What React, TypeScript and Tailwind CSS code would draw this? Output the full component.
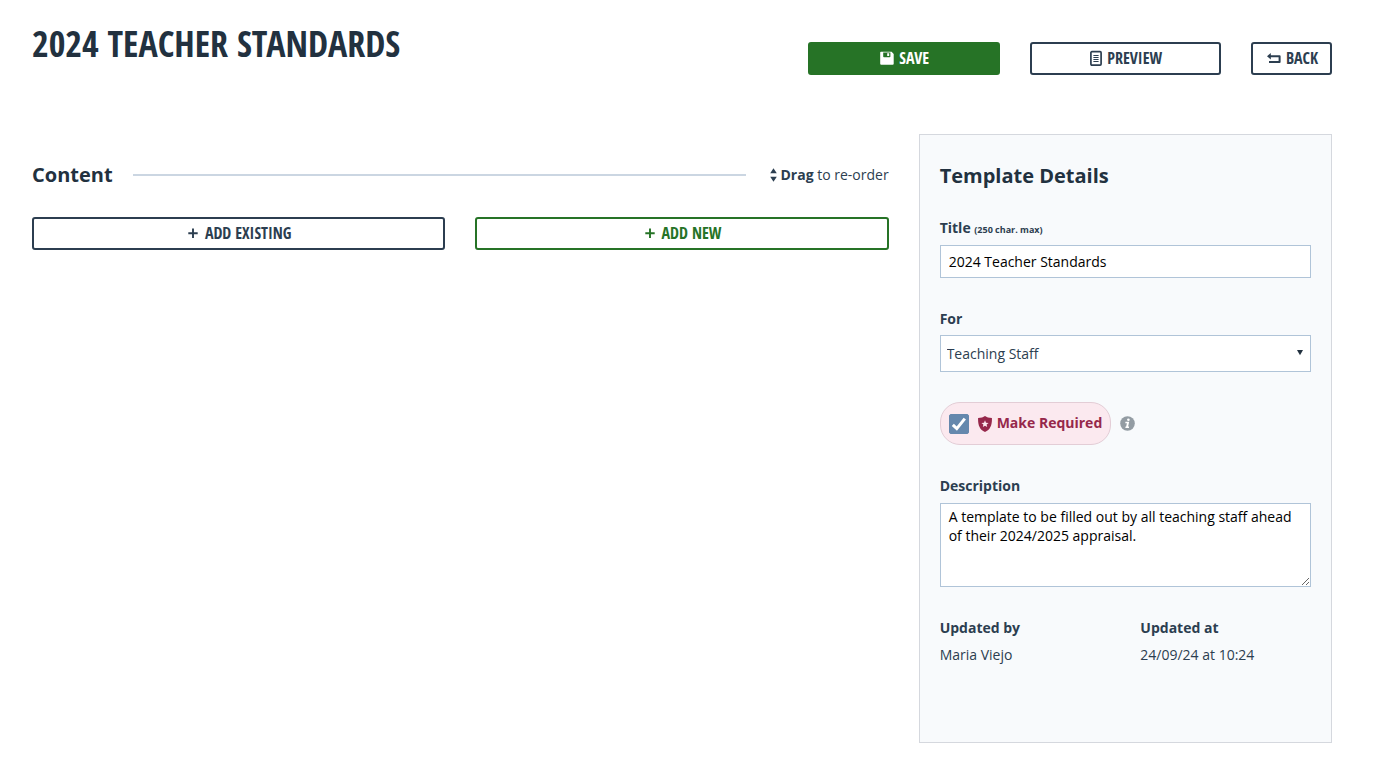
import type { ReactNode } from "react";

const condensed = "font-['Open_Sans_Condensed','Open_Sans',sans-serif]";
const buttonBase =
  "flex h-[33px] items-center justify-center border-2 rounded-[3px] pb-0.5 pl-0.5 text-base leading-none font-bold uppercase cursor-pointer";

function Button({ className, children }: { className: string; children: ReactNode }) {
  return (
    <button type="button" className={`${buttonBase} ${condensed} ${className}`}>
      {children}
    </button>
  );
}

function SaveIcon() {
  return (
    <svg width="14" height="14" viewBox="0 0 14 14" aria-hidden="true">
      <path
        fill="currentColor"
        fillRule="evenodd"
        d="M1 0.8h10.6L13.7 2.9V12.8a1 1 0 0 1-1 1H1.2a1 1 0 0 1-1-1V1.6a.8.8 0 0 1 .8-.8ZM3.2 1.6V5.4a.8.8 0 0 0 .8.8H9.6a.8.8 0 0 0 .8-.8V1.6ZM7.2 2.2H9.2V5H7.2Z"
      />
    </svg>
  );
}

function PreviewIcon() {
  return (
    <svg width="12" height="16" viewBox="0 0 12 16" fill="none" stroke="currentColor" aria-hidden="true">
      <rect x="0.9" y="1.7" width="10.2" height="13.4" rx="1" strokeWidth="1.7" />
      <path d="M3.4 5.5H8.6M3.4 7.5H8.6M3.4 9.5H8.6M3.4 11.5H8.6" strokeWidth="1" />
    </svg>
  );
}

function BackIcon() {
  return (
    <svg width="14" height="12" viewBox="0 0 14 12" fill="none" stroke="currentColor" aria-hidden="true">
      <path d="M3 4.2H12.6V9.9H2" strokeWidth="2" strokeLinejoin="round" />
      <path d="M0 4.2L3.8 1V7.4Z" fill="currentColor" stroke="none" />
    </svg>
  );
}

function PlusIcon() {
  return (
    <svg width="10" height="10" viewBox="0 0 10 10" stroke="currentColor" strokeWidth="1.9" aria-hidden="true">
      <path d="M5 0.6V10M0.3 5.3H9.7" />
    </svg>
  );
}

function SortIcon() {
  return (
    <svg width="7" height="14" viewBox="0 0 7 14" fill="currentColor" aria-hidden="true">
      <path d="M3.5 0.3L6.8 5.2H0.2ZM3.5 13.7L6.8 8.8H0.2Z" />
    </svg>
  );
}

function ShieldIcon() {
  return (
    <svg width="14" height="16" viewBox="0 0 14 16" aria-hidden="true">
      <path
        fill="currentColor"
        d="M7 0C8.6 1.2 11 1.9 13.9 2C14.2 8.5 12.6 13.6 7 16C1.4 13.6-.2 8.5.1 2C3 1.9 5.4 1.2 7 0Z"
      />
      <path
        fill="#fbe9ef"
        d="M7 4.3L8 6.7L10.6 6.9L8.6 8.6L9.2 11.1L7 9.8L4.8 11.1L5.4 8.6L3.4 6.9L6 6.7Z"
      />
    </svg>
  );
}

function InfoIcon() {
  return (
    <svg width="15" height="15" viewBox="0 0 15 15" aria-hidden="true">
      <circle cx="7.5" cy="7.5" r="7.3" fill="#939ca3" />
      <circle cx="8.4" cy="3.7" r="1.3" fill="#fff" />
      <path fill="#fff" d="M5.5 5.8H9.2L8.1 10.5H9.1L8.9 11.9H5.3L5.6 10.5H6.2L6.9 7.2H5.2Z" />
    </svg>
  );
}

export default function App() {
  return (
    <div className="min-h-screen bg-white pt-5 pr-[55px] pb-5 pl-8 font-['Open_Sans',sans-serif] text-sm leading-5 text-[#2c3e50]">
      <header className="grid grid-cols-[1fr_524px] items-start gap-[30px]">
        <h1 className={`${condensed} text-4xl leading-[48px] font-bold whitespace-nowrap text-[#22313f] uppercase`}>
          2024 Teacher Standards
        </h1>
        <div className="flex gap-[30px] pt-[22px]">
          <Button className="flex-1 gap-[5px] border-[#267326] bg-[#267326] text-white">
            <SaveIcon />
            Save
          </Button>
          <Button className="flex-1 gap-[5px] border-[#2c3e50] bg-white">
            <PreviewIcon />
            Preview
          </Button>
          <Button className="w-[81px] gap-[5px] border-[#2c3e50] bg-white">
            <BackIcon />
            Back
          </Button>
        </div>
      </header>

      <main className="mt-[59px] grid grid-cols-3 items-start gap-[30px]">
        <section className="col-span-2 pt-[27px]">
          <div className="flex items-center">
            <h2 className="text-xl leading-7 font-bold text-[#22313f]">Content</h2>
            <div className="mr-6 ml-5 h-0.5 flex-1 bg-[#cbd6e2]" />
            <p className="flex items-center gap-[3px]">
              <SortIcon />
              <span>
                <b>Drag</b> to re-order
              </span>
            </p>
          </div>
          <div className="mt-7 grid grid-cols-2 gap-[30px]">
            <Button className="gap-[7px] border-[#2c3e50] bg-white">
              <PlusIcon />
              Add existing
            </Button>
            <Button className="gap-[7px] border-[#267326] bg-white text-[#267326]">
              <PlusIcon />
              Add new
            </Button>
          </div>
        </section>

        <aside className="border border-[#d5d8de] bg-[#f8fafc] px-5 pt-[27px] pb-[77px]">
          <h2 className="text-xl leading-7 font-bold text-[#22313f]">Template Details</h2>

          <label htmlFor="title" className="mt-7 block font-bold">
            Title <small className="text-[9px] leading-none">(250 char. max)</small>
          </label>
          <input
            id="title"
            type="text"
            defaultValue="2024 Teacher Standards"
            className="mt-[7px] block h-[33px] w-full border border-[#b0c4d8] bg-white px-2 text-black"
          />

          <label htmlFor="audience" className="mt-[31px] block font-bold">
            For
          </label>
          <div className="relative mt-[6px]">
            <select
              id="audience"
              className="block h-[37px] w-full appearance-none border border-[#b0c4d8] bg-white px-[6px]"
            >
              <option>Teaching Staff</option>
            </select>
            <svg
              width="6"
              height="6"
              viewBox="0 0 6 6"
              aria-hidden="true"
              className="pointer-events-none absolute top-[15px] right-2 fill-[#22313f]"
            >
              <path d="M0 0.1H6L3 5.3Z" />
            </svg>
          </div>

          <div className="mt-[30px] flex items-center gap-[9px]">
            <label className="flex h-[43px] items-center rounded-[20px] border border-[#e3cdd6] bg-[#fbe9ef] px-2 font-bold text-[#96284b]">
              <span className="relative mr-[9px] block size-5">
                <input
                  type="checkbox"
                  defaultChecked
                  className="peer block size-5 appearance-none rounded-[2px] border border-[#6588ad] bg-white checked:bg-[#6588ad]"
                />
                <svg
                  viewBox="0 0 20 20"
                  aria-hidden="true"
                  className="pointer-events-none absolute inset-0 hidden fill-none stroke-white stroke-[3] peer-checked:block"
                >
                  <path d="M3.8 10.8L7.8 14.6L15.8 4.6" />
                </svg>
              </span>
              <ShieldIcon />
              <span className="ml-[5px] pb-0.5">Make Required</span>
            </label>
            <button type="button" aria-label="About required templates" className="cursor-pointer">
              <InfoIcon />
            </button>
          </div>

          <label htmlFor="description" className="mt-[31px] block font-bold">
            Description
          </label>
          <textarea
            id="description"
            defaultValue="A template to be filled out by all teaching staff ahead of their 2024/2025 appraisal."
            className="mt-[7px] block h-[84px] w-full resize border border-[#b0c4d8] bg-white px-2 py-[3px] leading-[19px] text-black"
          />

          <dl className="mt-[31px] grid grid-cols-2 gap-[30px]">
            <div>
              <dt className="font-bold">Updated by</dt>
              <dd className="mt-[7px]">Maria Viejo</dd>
            </div>
            <div>
              <dt className="font-bold">Updated at</dt>
              <dd className="mt-[7px]">24/09/24 at 10:24</dd>
            </div>
          </dl>
        </aside>
      </main>
    </div>
  );
}
